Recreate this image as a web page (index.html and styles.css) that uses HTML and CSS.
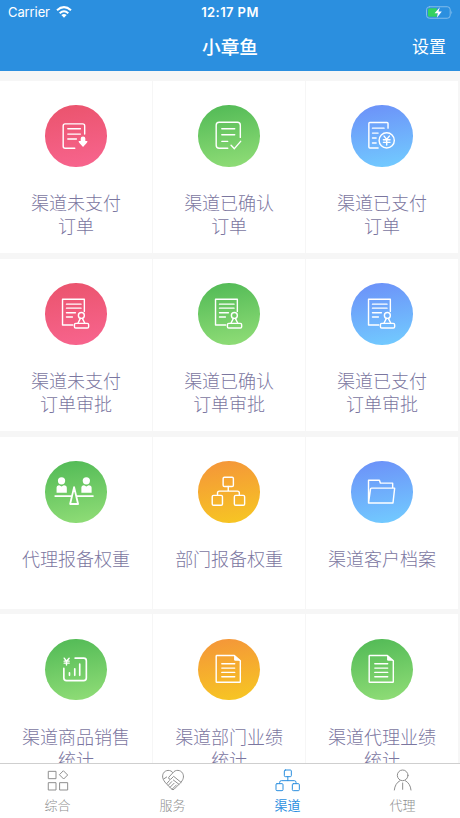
FILE: index.html
```html
<!DOCTYPE html>
<html lang="zh-CN">
<head>
<meta charset="utf-8">
<title>小章鱼</title>
<link rel="stylesheet" href="styles.css">
</head>
<body>
<svg class="defs" aria-hidden="true">
  <symbol id="stamp" viewBox="0 0 186 186">
    <path d="M84 127H53V49H119V86M65 64H109M65 76H109M65 90H92M65 103H83"/>
    <circle cx="110" cy="98" r="9"/><path d="M107 107L100 121M113 107L120 121"/><rect x="89" y="122" width="43" height="14" rx="4"/>
  </symbol>
  <symbol id="report" viewBox="0 0 186 186">
    <path d="M110 50H57q-2 0-2 2V129q0 2 2 2H126q2 0 2-2V66zM72 75H111M72 88H111M72 101H111M72 114H111"/>
    <path class="solid" d="M109 49L129 66H113q-4 0-4-4z"/>
  </symbol>
</svg>
<div class="screen">
  <header class="header">
    <div class="status">
      <div class="carrier"><span>Carrier</span>
        <svg class="wifi" viewBox="0 0 48 36"><path d="M3 13Q24-6 45 13M11 21.500Q24 10 37 21.500"/><path class="dot" d="M16 27Q24 21 32 27L24 35z"/></svg>
      </div>
      <span class="time">12:17 PM</span>
      <svg class="battery" viewBox="0 0 82 38"><rect class="shell" x="1.500" y="1.500" width="72" height="35" rx="9"/><path class="shell-end" d="M77 13q5 6 0 12z"/><path class="charge" d="M11 6H33V32H11q-5 0-5-5V11q0-5 5-5z"/><path class="bolt" d="M42 3L26 21H36L33 35L48 16H38z"/></svg>
    </div>
    <div class="nav"><span></span><h1>小章鱼</h1><a class="settings">设置</a></div>
  </header>
  <main class="grid">
    <section class="card"><div class="icon red"><svg viewBox="0 0 186 186"><path d="M90 131H61q-6 0-6-6V63q0-6 6-6H114q6 0 6 6V88M69 72H107M69 88H107M69 103H95"/><path class="solid" d="M108 101q0-6 7-6t7 6V109H128q1 3-2 6L115 127L104 115q-3-3-2-6H108z"/></svg></div><p>渠道未支付<br>订单</p></section>
    <section class="card"><div class="icon green"><svg viewBox="0 0 186 186"><path d="M90 131H64q-9 0-9-9V61q0-9 9-9H119q9 0 9 9V98M72 72H111M72 90H111M72 110H90M100 122L110 132L129 110"/></svg></div><p>渠道已确认<br>订单</p></section>
    <section class="card"><div class="icon blue"><svg viewBox="0 0 186 186"><path d="M82 130H57q-3 0-3-3V56q0-3 3-3H109q3 0 3 3V70M65 70H100M65 85H82M65 100H76M65 115H76"/><circle cx="108" cy="107" r="23"/><path d="M100 94L108 104L116 94M98 105H118M98 113H118M108 104V121"/></svg></div><p>渠道已支付<br>订单</p></section>

    <section class="card"><div class="icon red"><svg><use href="#stamp"/></svg></div><p>渠道未支付<br>订单审批</p></section>
    <section class="card"><div class="icon green"><svg><use href="#stamp"/></svg></div><p>渠道已确认<br>订单审批</p></section>
    <section class="card"><div class="icon blue"><svg><use href="#stamp"/></svg></div><p>渠道已支付<br>订单审批</p></section>

    <section class="card"><div class="icon green"><svg viewBox="0 0 186 186"><g class="solid"><circle cx="50" cy="60" r="11"/><circle cx="125" cy="60" r="11"/><path d="M35 96V81q0-8 8-8l7 4l7-4q9 0 9 8V96zM110 96V81q0-8 8-8l7 4l7-4q9 0 9 8V96z"/></g><path class="beam" d="M31 106H80M96 106H145M88 79L76 130H100z"/></svg></div><p>代理报备权重</p></section>
    <section class="card"><div class="icon orange"><svg viewBox="0 0 186 186"><rect x="76" y="49" width="31" height="28" rx="4"/><rect x="43" y="104" width="31" height="30" rx="4"/><rect x="110" y="104" width="31" height="30" rx="4"/><path d="M91.500 77V91M59 104V97q0-6 6-6H119q6 0 6 6V104"/></svg></div><p>部门报备权重</p></section>
    <section class="card"><div class="icon blue"><svg viewBox="0 0 186 186"><path d="M53 127V58H86L89 67H126V82M62 82H132L127 127H53L59 85q0-3 3-3z"/></svg></div><p>渠道客户档案</p></section>

    <section class="card"><div class="icon green"><svg viewBox="0 0 186 186"><path class="thick" d="M91 58H117q8 0 8 8V118q0 8-8 8H65q-8 0-8-8V89M74 102V110M90 90V110M105 76V110"/><path d="M58 58L65 67L73 58M58 67H73M58 73H73M65 67V79"/></svg></div><p>渠道商品销售<br>统计</p></section>
    <section class="card"><div class="icon orange"><svg><use href="#report"/></svg></div><p>渠道部门业绩<br>统计</p></section>
    <section class="card"><div class="icon green"><svg><use href="#report"/></svg></div><p>渠道代理业绩<br>统计</p></section>
  </main>
  <nav class="tabs">
    <a class="tab"><svg viewBox="0 0 72 72"><path d="M8 7H30V29H8zM8 41H30V63H8zM42 41H65V63H42zM53 6L65 18L53 30L41 18z"/></svg><span>综合</span></a>
    <a class="tab"><svg viewBox="0 0 72 72"><path d="M36 11C29 1 13 2 7 13C2 23 6 33 15 43L32 60Q36 65 40 60L57 43C67 33 70 23 65 13C59 2 43 1 36 11L23 25Q22 32 29 31L38 22L60 40M8 30L17 24M17 44L25 35M22 49L32 38M27 55L39 43M33 61L46 48M37 33L54 46"/></svg><span>服务</span></a>
    <a class="tab active"><svg viewBox="0 0 72 72"><rect x="25" y="3" width="21" height="20" rx="3"/><rect x="0" y="44" width="21" height="21" rx="3"/><rect x="49" y="44" width="21" height="21" rx="3"/><path d="M35.500 23V35M11 44V40q0-5 5-5H55q5 0 5 5V44"/></svg><span>渠道</span></a>
    <a class="tab"><svg viewBox="0 0 72 72"><circle cx="35" cy="19" r="16"/><path d="M10 63Q12 43 27 35M43 35Q58 43 60 63M35 42V61"/></svg><span>代理</span></a>
  </nav>
</div>
</body>
</html>
```

FILE: styles.css
```css
* { box-sizing: border-box; }
body { margin: 0; font-family: Inter, "Noto Sans CJK SC", sans-serif; }
.defs { display: none; }
.screen { display: flex; flex-direction: column; width: 460px; height: 818px; overflow: hidden; background: #f6f6f6; }
svg { overflow: visible; fill: none; stroke-linecap: round; stroke-linejoin: round; }

.header { flex: none; height: 71px; background: #2b8fdf; color: #fff; }
.status { display: grid; grid-template-columns: 1fr auto 1fr; align-items: center; height: 24px; padding: 0 8px; font-size: 13px; line-height: 24px; }
.carrier { display: flex; align-items: center; gap: 6px; letter-spacing: -0.1px; }
.wifi { width: 16px; height: 12px; stroke: #fff; stroke-width: 6; stroke-linecap: butt; }
.wifi .dot { fill: #fff; stroke: none; }
.time { font-weight: 600; letter-spacing: 0.4px; }
.battery { justify-self: end; width: 27px; height: 13px; margin-right: -1px; }
.shell { stroke: #83bdec; stroke-width: 3; }
.shell-end { fill: #83bdec; }
.charge { fill: #34d160; }
.bolt { fill: #fff; }
.nav { display: grid; grid-template-columns: 1fr auto 1fr; align-items: center; height: 46px; padding: 0 14px; }
.nav h1 { margin: 0; padding-top: 1px; font-size: 18.700px; font-weight: 500; line-height: 28px; }
.settings { justify-self: end; font-size: 17px; line-height: 26px; }

.grid { flex: 1; min-height: 0; overflow: hidden; display: grid; grid-template-columns: 152.200px 151.500px 152px; grid-auto-rows: 172px; column-gap: 1.200px; row-gap: 5.900px; padding-top: 9.800px; }
.card { display: flex; flex-direction: column; align-items: center; padding-top: 24.500px; background: #fff; }
.icon { flex: none; width: 61.500px; height: 61.500px; border-radius: 50%; }
.icon svg { display: block; width: 100%; height: 100%; stroke: #fff; stroke-width: 4.300; }
.solid { fill: #fff; stroke: none; }
.beam { stroke-width: 5.500; }
.thick { stroke-width: 5; }
.red { background: linear-gradient(170deg, #ea536c, #f8658f); }
.green { background: linear-gradient(170deg, #50b955, #92de78); }
.blue { background: linear-gradient(170deg, #6c8ff8, #72cdff); }
.orange { background: linear-gradient(170deg, #f4943a, #f7c822); }
.card p { margin: 25.500px 0 0; color: #7b769f; font-size: 18px; font-weight: 300; line-height: 23px; text-align: center; white-space: nowrap; }

.tabs { flex: none; display: grid; grid-template-columns: repeat(4, 1fr); height: 55px; border-top: 1px solid #cfcfcf; background: #fff; }
.tab { display: flex; flex-direction: column; align-items: center; padding-top: 5px; color: #8f8f8f; font-size: 13px; font-weight: 300; line-height: 18px; }
.tab svg { width: 24px; height: 24px; margin-bottom: 3px; stroke: currentColor; stroke-width: 3; }
.tab.active { color: #2b8fdf; font-weight: 400; }
```
